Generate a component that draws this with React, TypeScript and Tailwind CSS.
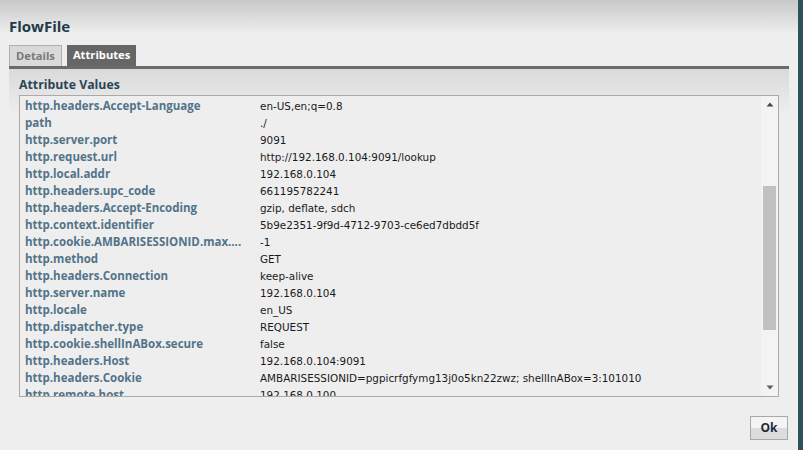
interface Attribute {
    name: string;
    value: string;
}

const ATTRIBUTES: ReadonlyArray<Attribute> = [
    { name: 'http.headers.Accept-Language', value: 'en-US,en;q=0.8' },
    { name: 'path', value: './' },
    { name: 'http.server.port', value: '9091' },
    { name: 'http.request.url', value: 'http://192.168.0.104:9091/lookup' },
    { name: 'http.local.addr', value: '192.168.0.104' },
    { name: 'http.headers.upc_code', value: '661195782241' },
    { name: 'http.headers.Accept-Encoding', value: 'gzip, deflate, sdch' },
    { name: 'http.context.identifier', value: '5b9e2351-9f9d-4712-9703-ce6ed7dbdd5f' },
    { name: 'http.cookie.AMBARISESSIONID.max....', value: '-1' },
    { name: 'http.method', value: 'GET' },
    { name: 'http.headers.Connection', value: 'keep-alive' },
    { name: 'http.server.name', value: '192.168.0.104' },
    { name: 'http.locale', value: 'en_US' },
    { name: 'http.dispatcher.type', value: 'REQUEST' },
    { name: 'http.cookie.shellInABox.secure', value: 'false' },
    { name: 'http.headers.Host', value: '192.168.0.104:9091' },
    { name: 'http.headers.Cookie', value: 'AMBARISESSIONID=pgpicrfgfymg13j0o5kn22zwz; shellInABox=3:101010' },
    { name: 'http.remote.host', value: '192.168.0.100' },
];

const OPEN_SANS = "font-['Open_Sans',sans-serif]";

export default function App() {
    return (
        <div className="flex h-[450px] w-[803px] overflow-hidden">
            <div className="flex w-[798px] flex-col bg-[linear-gradient(#c8c8c8_0px,#eeeeee_34px,#eeeeee_100%)]">
                <h1 className={`${OPEN_SANS} pl-[9px] pt-[16px] text-[15px] font-bold leading-[20px] text-[#1f3b4a]`}>
                    FlowFile
                </h1>

                <div className="mt-[9px] flex gap-[5px] pl-[9px]">
                    <Tab label="Details" />
                    <Tab label="Attributes" active />
                </div>

                <div className="mx-[9px] h-[3px] bg-[#6b6b6b]" />

                <div className="mx-[9px] flex flex-1 flex-col bg-[linear-gradient(#dadada_0px,#eeeeee_46px,#eeeeee_100%)] px-[10px]">
                    <h2 className={`${OPEN_SANS} pt-[5px] text-[12.3px] font-bold leading-[21px] text-[#2a4555]`}>
                        Attribute Values
                    </h2>
                    <AttributeTable />
                </div>

                <div className="flex justify-end px-[10px] pb-[10px] pt-[19px]">
                    <button
                        className={`${OPEN_SANS} h-[24px] w-[38px] border border-[#a8a8a8] bg-[linear-gradient(#f4f4f4_0%,#f4f4f4_50%,#dcdcdc_50%,#dcdcdc_100%)] text-[12px] font-bold text-[#1d2b3a]`}
                    >
                        Ok
                    </button>
                </div>
            </div>
            <div className="w-[5px] bg-[#2d525e]" />
        </div>
    );
}

function Tab({ label, active = false }: Readonly<{ label: string; active?: boolean }>) {
    return (
        <div
            className={
                active
                    ? `${OPEN_SANS} flex h-[21px] items-center bg-[#666666] px-[6px] text-[11.2px] font-bold text-white`
                    : `${OPEN_SANS} flex h-[21px] items-center border border-b-0 border-[#b0b0b0] bg-[#d9d9d9] px-[6px] text-[11.2px] font-bold text-[#7a7a7a]`
            }
        >
            {label}
        </div>
    );
}

function AttributeTable() {
    return (
        <div className="flex h-[302px] border border-[#aaaaaa] bg-[#eeeeee]">
            <div className="flex-1 overflow-hidden pt-[1px]">
                {ATTRIBUTES.map((attr) => (
                    <div key={attr.name} className="flex h-[17px] items-baseline">
                        <div className={`${OPEN_SANS} w-[240px] shrink-0 pl-[5px] text-[11.5px] font-bold leading-[17px] text-[#527389]`}>
                            {attr.name}
                        </div>
                        <div className="whitespace-nowrap font-['DejaVu_Sans',sans-serif] text-[10.4px] leading-[17px] text-[#1a1a1a]">
                            {attr.value}
                        </div>
                    </div>
                ))}
            </div>
            <Scrollbar />
        </div>
    );
}

function Scrollbar() {
    return (
        <div className="flex w-[17px] flex-col bg-[#f3f3f3]">
            <div className="flex h-[17px] items-center justify-center pl-[1px]">
                <svg width="8" height="5" viewBox="0 0 8 5" aria-hidden>
                    <path d="M4 0.5 L7.5 4.5 L0.5 4.5 Z" fill="#4a4a4a" />
                </svg>
            </div>
            <div className="flex-1 px-[2px] pt-[73px]">
                <div className="h-[144px] w-[13px] bg-[#c1c1c1]" />
            </div>
            <div className="flex h-[17px] items-center justify-center pl-[1px]">
                <svg width="8" height="5" viewBox="0 0 8 5" aria-hidden>
                    <path d="M0.5 0.5 L7.5 0.5 L4 4.5 Z" fill="#5e5e5e" />
                </svg>
            </div>
        </div>
    );
}
